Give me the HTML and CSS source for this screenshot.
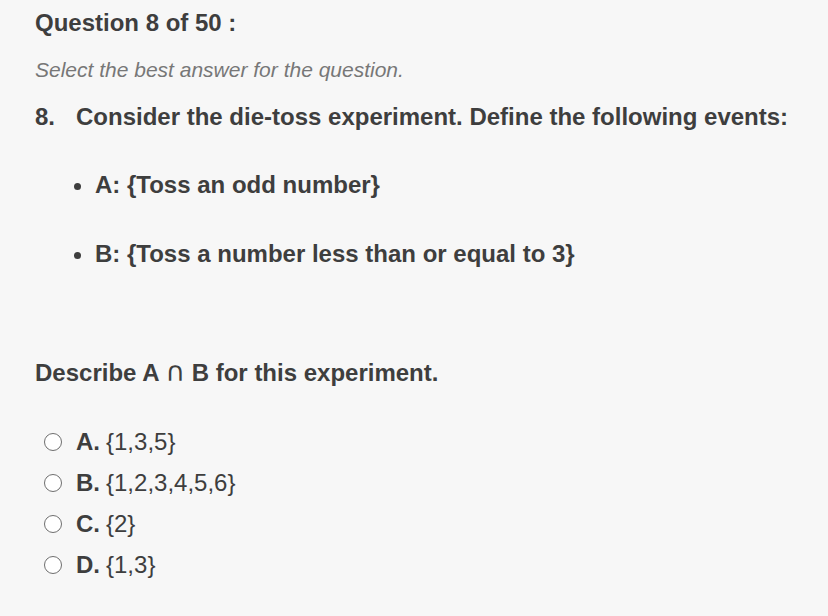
FILE: index.html
```html
<!DOCTYPE html>
<html>
<head>
<meta charset="utf-8">
<link rel="stylesheet" href="styles.css">
</head>
<body>
<div class="page">
  <h1 class="title">Question 8 of 50 :</h1>
  <p class="hint">Select the best answer for the question.</p>
  <div class="question">
    <span class="qnum">8.</span>
    <span class="qtext">Consider the die-toss experiment. Define the following events:</span>
  </div>
  <ul class="events">
    <li class="event">A: {Toss an odd number}</li>
    <li class="event">B: {Toss a number less than or equal to 3}</li>
  </ul>
  <p class="prompt">Describe A <span class="cap">∩</span> B for this experiment.</p>
  <div class="options">
    <label class="option"><span class="radio"></span><span class="letter">A.</span><span class="value">{1,3,5}</span></label>
    <label class="option"><span class="radio"></span><span class="letter">B.</span><span class="value">{1,2,3,4,5,6}</span></label>
    <label class="option"><span class="radio"></span><span class="letter">C.</span><span class="value">{2}</span></label>
    <label class="option"><span class="radio"></span><span class="letter">D.</span><span class="value">{1,3}</span></label>
  </div>
</div>
</body>
</html>
```
FILE: styles.css
```css
html, body {
  margin: 0;
  padding: 0;
}
body {
  width: 828px;
  height: 616px;
  overflow: hidden;
  background-color: #f7f7f7;
  font-family: "Liberation Sans", Arial, sans-serif;
  color: #3e3e3e;
}
.page {
  padding: 5px 0 0 35px;
}
.title {
  margin: 0;
  font-size: 24px;
  font-weight: bold;
  line-height: 36px;
}
.hint {
  margin: 14px 0 0;
  font-size: 21px;
  font-style: italic;
  line-height: 30px;
  color: #777;
}
.question {
  margin-top: 14px;
  display: flex;
  font-size: 24px;
  font-weight: bold;
  line-height: 36px;
}
.qnum {
  width: 41px;
}
.events {
  list-style: none;
  margin: 32px 0 0;
  padding: 0 0 0 36px;
  display: flex;
  flex-direction: column;
  gap: 33px;
}
.event {
  display: flex;
  align-items: center;
  font-size: 24px;
  font-weight: bold;
  line-height: 36px;
}
.event::before {
  content: "";
  width: 7px;
  height: 7px;
  border-radius: 50%;
  background: #3e3e3e;
  margin: 2px 14px 0 3px;
}
.prompt {
  margin: 83px 0 0;
  font-size: 24px;
  font-weight: bold;
  line-height: 36px;
}
.cap {
  font-family: "DejaVu Sans", sans-serif;
  font-weight: normal;
  font-size: 27px;
  line-height: 1;
}
.options {
  margin-top: 33px;
  display: flex;
  flex-direction: column;
  gap: 5px;
}
.option {
  display: flex;
  align-items: center;
  font-size: 24px;
  line-height: 36px;
}
.radio {
  box-sizing: border-box;
  width: 18px;
  height: 18px;
  border: 1.5px solid #6e6e6e;
  border-radius: 50%;
  background: #fff;
  margin: 0 14px 0 9px;
}
.letter {
  font-weight: bold;
  margin-right: 6px;
}
```
